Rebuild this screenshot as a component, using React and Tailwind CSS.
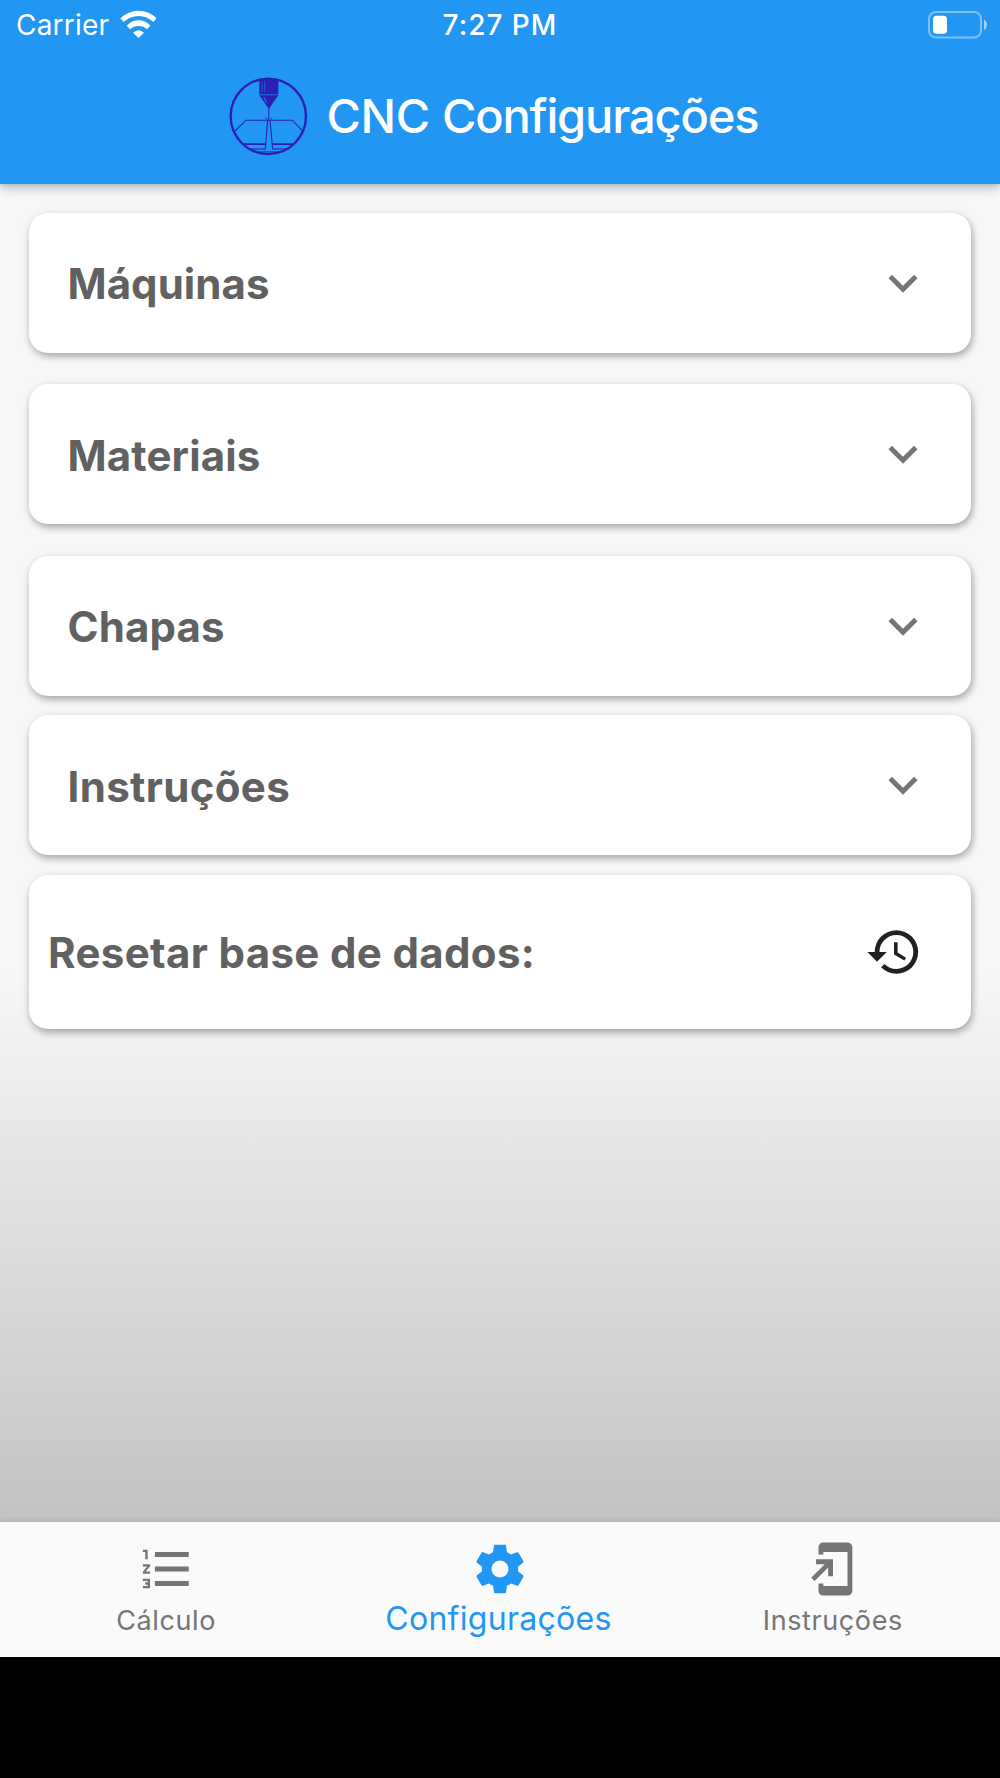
import { useState } from 'react'
import { MdAddToHomeScreen, MdExpandMore, MdFormatListNumbered, MdHistory } from 'react-icons/md'

const SECTIONS = [
  { key: 'machines', label: 'Máquinas', space: 'mb-[31.5px]', tracking: 'tracking-[0.05px]' },
  { key: 'materials', label: 'Materiais', space: 'mb-[31.5px]', tracking: 'tracking-[0.15px]' },
  { key: 'plates', label: 'Chapas', space: 'mb-[19.5px]', tracking: 'tracking-[0.15px]' },
  { key: 'instructions', label: 'Instruções', space: 'mb-[19.5px]', tracking: 'tracking-[0.35px]' },
]

const TABS = [
  { key: 'calc', label: 'Cálculo', icon: MdFormatListNumbered },
  { key: 'settings', label: 'Configurações', icon: GearIcon },
  { key: 'help', label: 'Instruções', icon: MdAddToHomeScreen },
]

const CARD = 'bg-white rounded-[19px] shadow-[1px_4px_8px_-1px_rgba(0,0,0,0.20),2px_3px_6px_rgba(0,0,0,0.12),1px_2px_12px_rgba(0,0,0,0.08)]'

function GearIcon({ className }) {
  return (
    <svg viewBox="0 0 24 24" className={className} fill="currentColor">
      <path d="M19.43 12.98c.04-.32.07-.64.07-.98s-.03-.66-.07-.98l2.11-1.65c.19-.15.24-.42.12-.64l-2-3.46c-.12-.22-.39-.3-.61-.22l-2.49 1c-.52-.4-1.08-.73-1.69-.98l-.38-2.65C14.46 2.18 14.25 2 14 2h-4c-.25 0-.46.18-.49.42l-.38 2.65c-.61.25-1.17.59-1.69.98l-2.49-1c-.23-.09-.49 0-.61.22l-2 3.46c-.13.22-.07.49.12.64l2.11 1.65c-.04.32-.07.65-.07.98s.03.66.07.98l-2.11 1.65c-.19.15-.24.42-.12.64l2 3.46c.12.22.39.3.61.22l2.49-1c.52.4 1.08.73 1.69.98l.38 2.65c.03.24.24.42.49.42h4c.25 0 .46-.18.49-.42l.38-2.65c.61-.25 1.17-.59 1.69-.98l2.49 1c.23.09.49 0 .61-.22l2-3.46c.12-.22.07-.49-.12-.64l-2.11-1.65zM12 15.5c-1.93 0-3.5-1.57-3.5-3.5s1.57-3.5 3.5-3.5 3.5 1.57 3.5 3.5-1.57 3.5-3.5 3.5z" />
    </svg>
  )
}

function WifiIcon() {
  return (
    <svg viewBox="360 28 110 84" className="w-[36.7px] h-7" fill="white">
      <path d="M361 53Q384 30 415.500 30T470 53L460 64Q441 46 415.500 46T371 64Z" />
      <path d="M380 75Q395 59 415.500 59T451 75L441 86Q430 76 415.500 76T390 86Z" />
      <path d="M399 96Q415.500 81 432 96L415.500 112Z" />
    </svg>
  )
}

function BatteryIcon() {
  return (
    <svg viewBox="0 0 60 28" className="w-[60px] h-7">
      <rect x="1" y="1" width="52" height="25.500" rx="7" fill="none" stroke="white" strokeOpacity="0.42" strokeWidth="2" />
      <rect x="5" y="4.800" width="14" height="18" rx="3.500" fill="white" />
      <path d="M56 8.500Q59 10.500 59 13.700T56 19Z" fill="white" fillOpacity="0.6" />
    </svg>
  )
}

function Logo() {
  return (
    <svg viewBox="56 50 237 237" className="w-[79px] h-[79px]" fill="none" stroke="#2a1fb5" strokeWidth="3.500">
      <circle cx="174" cy="168" r="113" strokeWidth="7" />
      {/* torch */}
      <path d="M147 57H204V102H147ZM147 105H204L178 142H173Z" fill="#2a1fb5" stroke="none" />
      <path d="M155 61V96M163 62V96" stroke="#2196f3" strokeWidth="1.500" />
      <path d="M160 110L169 127" stroke="#2196f3" strokeWidth="2.500" />
      <path d="M147 103.500H204" stroke="#2a1fb5" strokeWidth="1.500" />
      <path d="M175.500 140V182" strokeWidth="3" />
      <path d="M165 171L172 180M186 171L179 180" strokeWidth="2.500" />
      {/* plate */}
      <path d="M74 212L107 179.500H172L165 266H118" strokeWidth="3.200" />
      <path d="M275 210L246 179.500H179L187 266H232" strokeWidth="3.200" />
      <path d="M98 251.500H166M186 251.500H250" strokeWidth="5" />
      <path d="M132 274H218" strokeWidth="2" />
    </svg>
  )
}

export default function App() {
  const [tab, setTab] = useState('settings')

  return (
    <div className="h-[1778px] w-full flex flex-col bg-black font-[Inter,sans-serif] overflow-hidden">
      {/* Header */}
      <header className="relative h-[184px] shrink-0 bg-[#2196f3] text-white shadow-[0_5px_10px_rgba(0,0,0,0.20),0_1px_5px_rgba(0,0,0,0.12)]">
        <div className="h-12 grid grid-cols-3 items-start px-[16px] pt-[10px] text-[28px] leading-[31px]">
          <div className="flex items-start gap-[10.5px]">
            <span className="tracking-[0.2px]">Carrier</span>
            <WifiIcon />
          </div>
          <span className="text-center font-medium tracking-[1px]">7:27 PM</span>
          <div className="flex justify-end pt-px -mr-1">
            <BatteryIcon />
          </div>
        </div>
        <div className="h-[136px] flex items-center gap-[18.5px] pl-[229px]">
          <Logo />
          <h1 className="text-[47px] font-medium leading-none pb-[2px] whitespace-nowrap">
            <span className="tracking-[-0.4px]">CNC </span>
            <span className="tracking-[-1.15px]">Configurações</span>
          </h1>
        </div>
      </header>

      {/* Body */}
      <main className="flex-1 px-[29px] pt-[28.5px] bg-[linear-gradient(#f7f7f7_0px,#f7f7f7_786px,#c3c3c3_1338px)]">
        {SECTIONS.map(s => (
          <button
            key={s.key}
            className={`w-full h-[140px] pl-[38.5px] pr-[39px] flex items-center justify-between ${CARD} ${s.space}`}
          >
            <span className={`text-[42px] font-bold text-[#616161] pt-[2px] ${s.tracking}`}>{s.label}</span>
            <MdExpandMore className="w-[58px] h-[58px] text-[#757575]" />
          </button>
        ))}
        <div className={`h-[154px] pl-[19px] pr-12 flex items-center justify-between ${CARD}`}>
          <span className="text-[42px] font-bold text-[#616161] tracking-[0.35px] pt-[2px]">Resetar base de dados:</span>
          <button>
            <MdHistory className="w-[58px] h-[58px] text-[#212121]" />
          </button>
        </div>
      </main>

      {/* Tabs */}
      <nav className="h-[135px] shrink-0 mb-[121px] grid grid-cols-3 bg-[#fafafa] shadow-[0_-1px_5px_rgba(0,0,0,0.12)]">
        {TABS.map(t => {
          const Icon = t.icon
          const active = t.key === tab
          return (
            <button
              key={t.key}
              onClick={() => setTab(t.key)}
              className={`flex flex-col items-center pt-[18px] ${active ? 'text-[#2196f3]' : 'text-[#757575]'}`}
            >
              <Icon className="w-[58px] h-[58px]" />
              <span className={active ? 'text-[32px] leading-[41px] tracking-[0.3px] pr-[3px]' : 'text-[27px] leading-[46px] tracking-[0.6px] pr-[1px]'}>
                {t.label}
              </span>
            </button>
          )
        })}
      </nav>
    </div>
  )
}
